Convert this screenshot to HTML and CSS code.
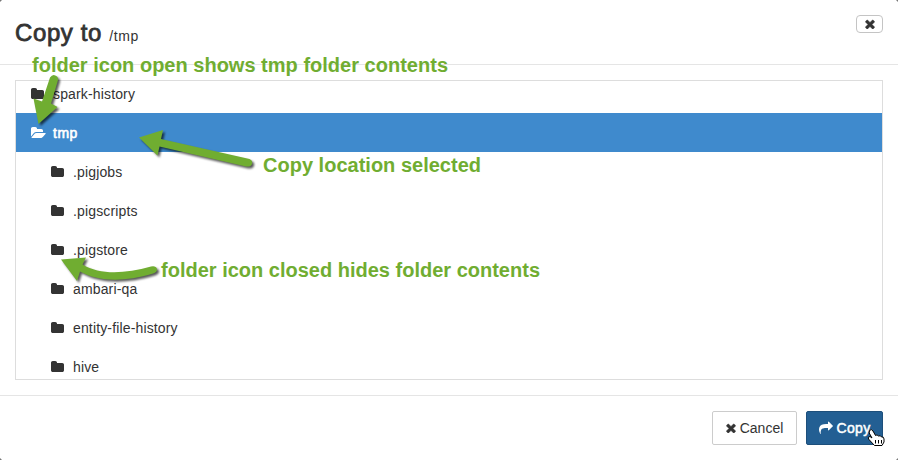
FILE: index.html
```
<!DOCTYPE html>
<html lang="en">
<head>
<meta charset="utf-8">
<title>Copy to</title>
<link rel="stylesheet" href="styles.css">
</head>
<body>
<svg class="defs" aria-hidden="true">
  <symbol id="folder" viewBox="64 0 1792 1792"><path d="M1728 608v704q0 92-66 158t-158 66h-1216q-92 0-158-66t-66-158v-960q0-92 66-158t158-66h320q92 0 158 66t66 158v32h672q92 0 158 66t66 158z"/></symbol>
  <symbol id="folder-open" viewBox="0 0 1920 1792"><path d="M1879 952q0 31-31 66l-336 396q-43 51-120.5 86.5t-143.5 35.5h-1088q-34 0-60.5-13t-26.5-43q0-31 31-66l336-396q43-51 120.5-86.5t143.5-35.5h1088q34 0 60.5 13t26.5 43zm-343-344v160h-832q-94 0-197 47.5t-164 119.5l-337 396-5 6q0-4-.5-12.5t-.5-12.5v-960q0-92 66-158t158-66h320q92 0 158 66t66 158v32h544q92 0 158 66t66 158z"/></symbol>
  <symbol id="times" viewBox="302 238 1188 1316"><path d="M1490 1322q0 40-28 68l-136 136q-28 28-68 28t-68-28l-294-294-294 294q-28 28-68 28t-68-28l-136-136q-28-28-28-68t28-68l294-294-294-294q-28-28-28-68t28-68l136-136q28-28 68-28t68 28l294 294 294-294q28-28 68-28t68 28l136 136q28 28 28 68t-28 68l-294 294 294 294q28 28 28 68z"/></symbol>
  <symbol id="share" viewBox="0 0 1792 1792"><path d="M1792 640q0 26-19 45l-512 512q-19 19-45 19t-45-19-19-45v-256h-224q-98 0-175.5 6t-154 21.5-133 42.5-105.5 69.5-80 101-48.5 138.5-17.5 181q0 55 5 123 0 6 2.5 23.5t2.5 26.5q0 15-8.5 25t-23.5 10q-16 0-28-17-7-9-13-22t-13.5-30-10.5-24q-127-285-127-451 0-199 53-333 162-403 875-403h224v-256q0-26 19-45t45-19 45 19l512 512q19 19 19 45z"/></symbol>
</svg>
<div class="modal">
  <header class="modal-header">
    <h1 class="title">Copy to <small>/tmp</small></h1>
    <button class="close" aria-label="Close"><svg class="x"><use href="#times"/></svg></button>
  </header>
  <main class="modal-body">
    <div class="tree">
      <div class="row"><svg class="icon"><use href="#folder"/></svg><span>spark-history</span></div>
      <div class="row selected"><svg class="icon open"><use href="#folder-open"/></svg><span>tmp</span></div>
      <div class="row child"><svg class="icon"><use href="#folder"/></svg><span>.pigjobs</span></div>
      <div class="row child"><svg class="icon"><use href="#folder"/></svg><span>.pigscripts</span></div>
      <div class="row child"><svg class="icon"><use href="#folder"/></svg><span>.pigstore</span></div>
      <div class="row child"><svg class="icon"><use href="#folder"/></svg><span>ambari-qa</span></div>
      <div class="row child"><svg class="icon"><use href="#folder"/></svg><span>entity-file-history</span></div>
      <div class="row child"><svg class="icon"><use href="#folder"/></svg><span>hive</span></div>
    </div>
  </main>
  <footer class="modal-footer">
    <button class="btn"><svg class="x"><use href="#times"/></svg><span>Cancel</span></button>
    <button class="btn primary"><svg class="share"><use href="#share"/></svg><span>Copy</span></button>
  </footer>
</div>
<svg class="overlay" viewBox="0 0 898 460">
  <g class="arrow">
    <path d="M50 77.500Q53 73 57 76.500Q58.500 78 58 80L51 103.500L57.500 107L38.500 124L33.500 98.500L42 101.500Z"/>
    <path d="M139 137.500L163 130L161 139L249.500 159Q253 160.500 252 164Q251 167 246 166.500L159.500 146.500L157.500 155.500Z"/>
    <path d="M61 259.500L86 257.500L82.500 264.500C100 275 124 274 151 266.500Q156 265.500 157 269Q157.500 272 153 273.500C122 283 97 281 80 271.500L77 281Z"/>
  </g>
  <g class="notes">
    <text x="32" y="72" textLength="416">folder icon open shows tmp folder contents</text>
    <text x="263" y="172" textLength="218">Copy location selected</text>
    <text x="161" y="277" textLength="379">folder icon closed hides folder contents</text>
  </g>
  <g class="hand">
    <path d="M869.500 430.500Q871.500 428.500 873 431L875.500 435.500Q877 434 878.500 436Q880.500 435 881.500 437Q884 436.500 884 439V442L882 445.500H874.500L868.500 439Q867.500 436.500 870 436.500L872 438L869.200 433Z"/>
    <path d="M875.500 440V443.500M878.500 440V443.500M881.500 440V443.500"/>
  </g>
  <path class="corner" d="M0 0H2L0 2ZM898 0H896L898 2ZM0 460V458L2 460ZM898 460V458L896 460Z"/>
</svg>
</body>
</html>
```

FILE: styles.css
```
* { box-sizing: border-box; }
body {
  margin: 0;
  font: 14px/20px "Liberation Sans", Arial, sans-serif;
  color: #333;
  background: #fff;
}
.defs { display: none; }
.modal {
  width: 898px;
  height: 460px;
  display: flex;
  flex-direction: column;
  overflow: hidden;
}
.modal-header {
  height: 65px;
  padding: 15px 15px 0;
  border-bottom: 1px solid #e5e5e5;
  display: flex;
  justify-content: space-between;
  align-items: flex-start;
}
.title {
  margin: 1px 0 0;
  font-size: 24px;
  font-weight: 400;
  line-height: 34px;
  -webkit-text-stroke: .8px #333;
  letter-spacing: .6px;
}
.title small {
  font-size: 14px;
  letter-spacing: .6px;
  -webkit-text-stroke: 0;
}
button { font: inherit; color: #333; background: #fff; padding: 0; }
svg { fill: currentColor; }
.close {
  width: 27px;
  height: 18px;
  border: 1px solid #c4c4c4;
  border-radius: 4px;
  display: flex;
  align-items: center;
  justify-content: center;
}
.x { width: 10px; height: 10px; stroke: currentColor; stroke-width: 60px; overflow: visible; }
.modal-body { padding: 15px; flex: none; }
.tree {
  height: 300px;
  border: 1px solid #ddd;
  overflow: hidden;
  display: flex;
  flex-direction: column;
  justify-content: flex-start;
}
.row {
  flex: none;
  height: 39px;
  padding-left: 15px;
  display: flex;
  align-items: center;
  letter-spacing: .15px;
}
.row:first-child { height: 32px; padding-bottom: 6px; }
.child { padding-left: 35px; }
.selected {
  color: #fff;
  background: #3f8acd;
  -webkit-text-stroke: .6px #fff;
  letter-spacing: .5px;
}
.icon { width: 14px; height: 14px; margin-right: 8px; stroke: none; }
.open { width: 15px; margin-right: 7px; }
.modal-footer {
  height: 65px;
  border-top: 1px solid #e5e5e5;
  padding: 15px;
  display: flex;
  justify-content: flex-end;
  gap: 9px;
}
.btn {
  width: 85px;
  height: 34px;
  border: 1px solid #ccc;
  border-radius: 2px;
  display: flex;
  align-items: center;
  justify-content: center;
  gap: 4px;
}
.primary {
  width: 77px;
  color: #fff;
  background: #235f93;
  border-color: #1d4f7b;
  letter-spacing: .3px;
  -webkit-text-stroke: .5px #fff;
}
.share { width: 14px; height: 14px; stroke: none; }
.overlay {
  position: absolute;
  top: 0;
  left: 0;
  width: 898px;
  height: 460px;
  pointer-events: none;
}
.arrow { fill: #70ad31; filter: drop-shadow(2px 2px 1px rgba(0, 0, 0, .65)); }
.notes { fill: #70ad31; font-size: 20px; font-weight: 700; }
.hand { fill: #fff; stroke: #000; stroke-width: 1px; }
.corner { fill: #777; }
```
